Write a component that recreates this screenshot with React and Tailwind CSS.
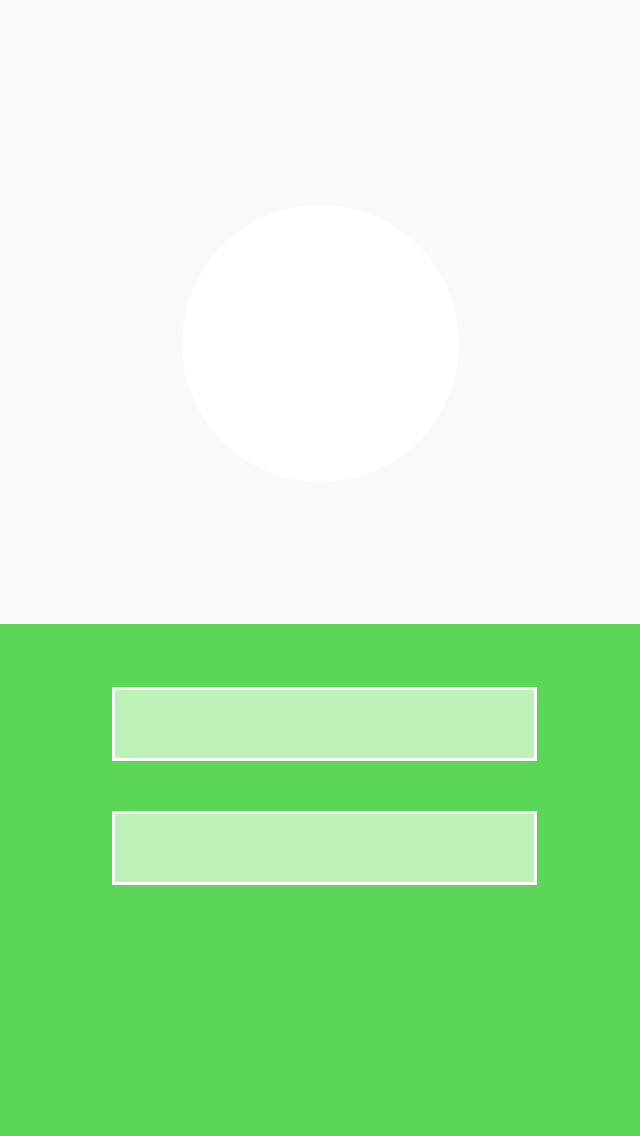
export default function App() {
  return (
    <div className="w-[640px] h-[1136px] flex flex-col overflow-hidden">
      <div className="h-[624px] bg-[#f9f9f9] flex justify-center pt-[205px]">
        <div className="w-[277px] h-[277px] rounded-full bg-white" />
      </div>
      <div className="flex-1 bg-[#5bd658] flex flex-col pt-[63px] pl-[112px] gap-[50px]">
        <div className="w-[425px] h-[74px] border-[3px] border-white bg-[#bdf2b9]" />
        <div className="w-[425px] h-[74px] border-[3px] border-white bg-[#bdf2b9]" />
      </div>
    </div>
  );
}
